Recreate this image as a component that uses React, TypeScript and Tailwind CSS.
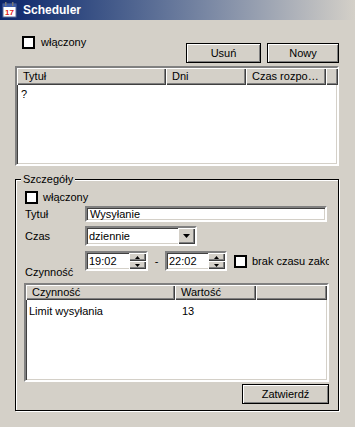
import React from 'react';

const sunken =
  'border-2 border-t-[#808080] border-l-[#808080] border-r-white border-b-white shadow-[inset_1px_1px_0_#404040,inset_-1px_-1px_0_#d4d0c8]';
const raised =
  'shadow-[inset_1px_1px_0_#ffffff,inset_-1px_-1px_0_#404040,inset_-2px_-2px_0_#808080]';

function CheckBox() {
  return <div className="w-[13px] h-[13px] shrink-0 bg-white border-2 border-black" />;
}

function WinButton({ label, width }: { label: string; width: string }) {
  return (
    <button
      className={`${width} h-[20px] border border-black bg-[#d4d0c8] flex items-center justify-center shadow-[inset_1px_1px_0_#ffffff,inset_-1px_-1px_0_#808080] text-black`}
    >
      {label}
    </button>
  );
}

function HeaderCell({ label, width }: { label?: string; width: string }) {
  return (
    <div
      className={`${width} h-full shrink-0 flex items-center px-[6px] bg-[#d4d0c8] whitespace-nowrap overflow-hidden ${raised}`}
    >
      {label}
    </div>
  );
}

function Spin({ value, width }: { value: string; width: string }) {
  return (
    <div className={`${width} h-[20px] bg-white flex items-stretch ${sunken}`}>
      <div className="flex-1 flex items-center pl-[2px]">{value}</div>
      <div className="w-[17px] flex flex-col">
        {['up', 'down'].map(d => (
          <div key={d} className={`flex-1 bg-[#d4d0c8] flex items-center justify-center ${raised}`}>
            <svg width="5" height="3" viewBox="0 0 5 3">
              <path d={d === 'up' ? 'M2.5 0 L5 3 L0 3 Z' : 'M0 0 L5 0 L2.5 3 Z'} fill="#000" />
            </svg>
          </div>
        ))}
      </div>
    </div>
  );
}

export default function App() {
  return (
    <div className="w-[355px] h-[427px] bg-[#d4d0c8] overflow-hidden text-[11px] leading-[13px] text-black font-['Liberation_Sans',Arial,sans-serif]">
      {/* Title bar */}
      <div className="h-[20px] flex items-center gap-[5px] pl-[2px] bg-linear-to-r from-[#0a246a] to-[#d4d0c8]">
        <svg width="16" height="16" viewBox="0 0 16 16">
          <rect x="1" y="2" width="13" height="13" fill="#fff" stroke="#5a6c9a" />
          <rect x="1" y="2" width="13" height="3" fill="#3b5ba8" />
          <rect x="3" y="0" width="1.5" height="4" fill="#777" />
          <rect x="10" y="0" width="1.5" height="4" fill="#777" />
          <text x="7.5" y="13" fontSize="8" fontWeight="bold" fill="#e02020" textAnchor="middle" fontFamily="Liberation Sans, Arial, sans-serif">17</text>
        </svg>
        <span className="text-white font-bold text-[12px]">Scheduler</span>
      </div>

      {/* Top controls */}
      <div className="flex h-[46px]">
        <div className="ml-[22px] mt-[16px] h-[13px] flex items-center gap-[6px]">
          <CheckBox />
          <span>włączony</span>
        </div>
        <div className="ml-auto mr-[16px] mt-[23px] flex gap-[6px]">
          <WinButton label="Usuń" width="w-[75px]" />
          <WinButton label="Nowy" width="w-[72px]" />
        </div>
      </div>

      {/* Main list */}
      <div className={`ml-[15px] w-[324px] h-[100px] bg-white flex flex-col ${sunken}`}>
        <div className="h-[17px] flex shrink-0">
          <HeaderCell label="Tytuł" width="w-[149px]" />
          <HeaderCell label="Dni" width="w-[80px]" />
          <HeaderCell label="Czas rozpo…" width="w-[80px]" />
          <HeaderCell width="flex-1" />
        </div>
        <div className="pl-[4px] pt-[3px]">?</div>
      </div>

      {/* Details group */}
      <div className="relative ml-[15px] mt-[13px] w-[324px] h-[232px] border border-black shadow-[inset_1px_1px_0_#fff,1px_1px_0_#fff] pl-[9px] pr-[9px] flex flex-col">
        <span className="absolute -top-[7px] left-[5px] px-[2px] bg-[#d4d0c8]">Szczegóły</span>

        <div className="mt-[11px] h-[12px] flex items-center gap-[5px]">
          <CheckBox />
          <span>włączony</span>
        </div>

        <div className="mt-[3px] flex items-center h-[16px]">
          <span className="w-[60px]">Tytuł</span>
          <div className={`w-[242px] h-[16px] bg-white flex items-center pl-[3px] ${sunken}`}>Wysyłanie</div>
        </div>

        <div className="mt-[4px] flex items-center h-[20px]">
          <span className="w-[60px]">Czas</span>
          <div className={`w-[112px] h-[20px] bg-white flex items-stretch ${sunken}`}>
            <div className="flex-1 flex items-center pl-[2px]">dziennie</div>
            <div className={`w-[17px] bg-[#d4d0c8] flex items-center justify-center ${raised}`}>
              <svg width="7" height="4" viewBox="0 0 7 4">
                <path d="M0 0 L7 0 L3.5 4 Z" fill="#000" />
              </svg>
            </div>
          </div>
        </div>

        <div className="mt-[5px] flex items-center h-[20px]">
          <span className="w-[60px]" />
          <Spin value="19:02" width="w-[63px]" />
          <span className="w-[17px] text-center">-</span>
          <Spin value="22:02" width="w-[62px]" />
          <div className="ml-[7px] flex items-center gap-[5px]">
            <CheckBox />
            <span className="w-[77px] overflow-hidden whitespace-nowrap">brak czasu zakończenia</span>
          </div>
        </div>

        <div className="-mt-[5px] h-[13px]">Czynność</div>

        <div className={`-ml-[1px] mt-[4px] w-[305px] h-[99px] bg-white flex flex-col ${sunken}`}>
          <div className="h-[15px] flex shrink-0">
            <HeaderCell label="Czynność" width="w-[149px]" />
            <HeaderCell label="Wartość" width="w-[81px]" />
            <HeaderCell width="flex-1" />
          </div>
          <div className="flex pt-[5px]">
            <div className="w-[149px] pl-[3px]">Limit wysyłania</div>
            <div className="pl-[7px]">13</div>
          </div>
        </div>

        <div className="mt-[2px] flex justify-end">
          <WinButton label="Zatwierdź" width="w-[87px]" />
        </div>
      </div>
    </div>
  );
}
